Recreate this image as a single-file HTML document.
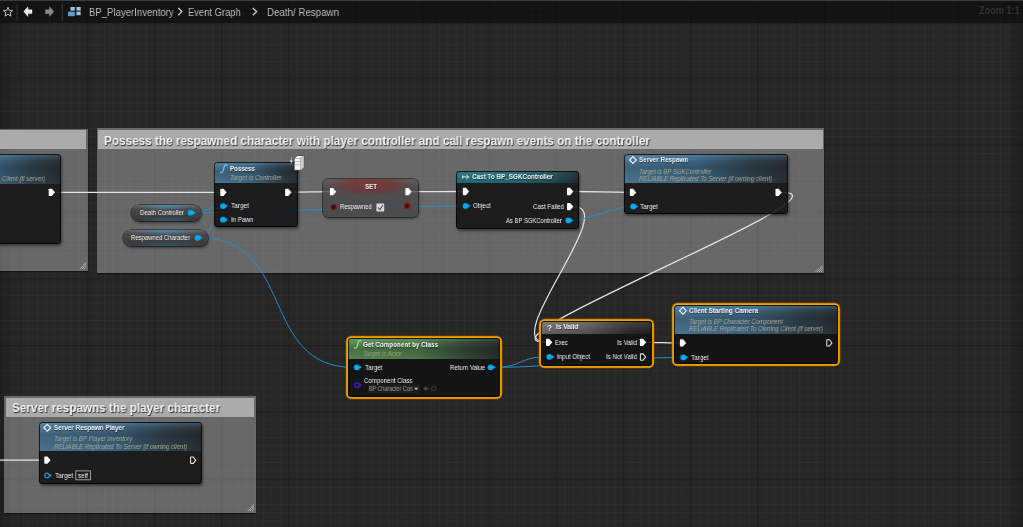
<!DOCTYPE html>
<html><head><meta charset="utf-8"><style>
*{margin:0;padding:0;box-sizing:border-box}
html,body{width:1023px;height:527px;overflow:hidden;background:#262626;font-family:"Liberation Sans",sans-serif}
.grid{position:absolute;left:0;top:0}
.vig{position:absolute;left:0;top:22px;width:1023px;height:505px;background:linear-gradient(90deg,rgba(0,0,0,0.22) 0,rgba(0,0,0,0) 16px,rgba(0,0,0,0) 1007px,rgba(0,0,0,0.25) 1023px)}
.layer{position:absolute;left:0;top:0;width:1023px;height:527px}
.topbar{position:absolute;left:0;top:0;width:1023px;height:22.5px;background:rgba(0,0,0,0.5);border-top:1px solid #3c3c3c}
.cmt{position:absolute;background:rgba(255,255,255,0.30);box-shadow:0 1px 1px rgba(0,0,0,0.45)}
.cmth{position:absolute;left:1.5px;right:1.5px;top:1.6px;height:19.1px;background:#ababab}
.grip{position:absolute;right:1.5px;bottom:1.5px;width:8px;height:8px;background:repeating-linear-gradient(45deg,rgba(255,255,255,0.28) 0 0.8px,rgba(255,255,255,0) 0.8px 1.6px),repeating-linear-gradient(135deg,rgba(255,255,255,0.28) 0 0.8px,rgba(255,255,255,0) 0.8px 1.6px);clip-path:polygon(100% 0,100% 100%,0 100%)}
.node{position:absolute;border-radius:3.5px;background:rgba(18,18,18,0.88);box-shadow:1px 2px 3px rgba(0,0,0,0.45);overflow:hidden}
.node::after{content:'';position:absolute;left:0;top:0;right:0;bottom:0;border-radius:3.5px;box-shadow:inset 0 0 0 0.9px rgba(0,0,0,0.8)}
.node.sel{box-shadow:0 0 0 1.8px #eea200,0 0 0 2.5px rgba(170,90,0,0.7),0 1px 3px rgba(0,0,0,0.5)}
.hdr{position:absolute;left:0;top:0;right:0}
.hb{background:linear-gradient(180deg,rgba(110,180,230,0.30) 0,rgba(110,180,230,0) 22%,rgba(0,0,0,0.16) 45%,rgba(0,0,0,0.02) 100%),linear-gradient(90deg,#4a7692 0,#3e6480 45%,#2f404b 78%,#2a2f33 100%)}
.ht{background:linear-gradient(180deg,rgba(255,255,255,0.06) 0,rgba(0,0,0,0.05) 100%),linear-gradient(90deg,#1f6f78 0,#1f6a73 50%,#1f4a52 80%,#1e2a2e 100%)}
.hg{background:linear-gradient(180deg,rgba(160,230,150,0.22) 0,rgba(160,230,150,0) 20%,rgba(0,0,0,0.2) 50%,rgba(0,0,0,0.05) 100%),linear-gradient(90deg,#5a8a56 0,#507c4c 45%,#34463a 80%,#2c302c 100%)}
.hgr{background:linear-gradient(180deg,rgba(255,255,255,0.12) 0,rgba(0,0,0,0.1) 100%),linear-gradient(90deg,#6a6a6a 0,#5a5a5a 40%,#2a2a2a 80%,#1f1f1f 100%)}
.setnode{position:absolute;border-radius:5px;background:linear-gradient(180deg,#5a5a5a 0,#484848 25%,#444 100%);box-shadow:0 0 0 0.8px rgba(0,0,0,0.8),1px 2px 3px rgba(0,0,0,0.5);overflow:hidden;opacity:0.78}
.setglow{position:absolute;left:6px;right:6px;top:0;height:16px;background:radial-gradient(ellipse 55% 75% at 50% 35%,rgba(150,30,30,0.8) 0,rgba(130,30,30,0.55) 50%,rgba(120,30,30,0) 100%)}
.var{position:absolute;border-radius:8px;background:radial-gradient(ellipse 45% 38% at 50% 0,rgba(70,165,230,0.6),rgba(70,165,230,0) 100%),radial-gradient(ellipse 45% 30% at 50% 100%,rgba(50,140,200,0.38),rgba(50,140,200,0) 100%),linear-gradient(180deg,#666 0,#4a4a4a 25%,#3e3e3e 70%,#383838 100%);box-shadow:0 0 0 0.6px rgba(0,0,0,0.8),1px 2px 3px rgba(0,0,0,0.45)}
.t{position:absolute;white-space:nowrap;transform-origin:0 50%;color:#f0f0f0;-webkit-font-smoothing:antialiased;will-change:transform}
.crumb{color:#bdbdbd}
.zoomt{color:#343434;font-weight:bold}
.ctitle{font-weight:bold;color:#f4f4f4;text-shadow:0.8px 1px 1px rgba(0,0,0,0.8)}
.ntitle{font-weight:bold;color:#f4f4f4;text-shadow:0.5px 0.6px 0.6px rgba(0,0,0,0.45)}
.sub{font-style:italic;color:#a8a890}
.subg{color:#98a474}
.pin{color:#f2f2f2}
.dd{color:#9a9a9a}
</style></head>
<body>
<svg class="grid" width="1023" height="527" viewBox="0 0 1023 527"><path d="M3.95 0V527M12.33 0V527M29.07 0V527M37.45 0V527M45.82 0V527M54.20 0V527M62.57 0V527M70.94 0V527M79.32 0V527M96.07 0V527M104.44 0V527M112.81 0V527M121.19 0V527M129.56 0V527M137.94 0V527M146.31 0V527M163.06 0V527M171.43 0V527M179.81 0V527M188.18 0V527M196.55 0V527M204.93 0V527M213.30 0V527M230.05 0V527M238.42 0V527M246.80 0V527M255.17 0V527M263.55 0V527M271.92 0V527M280.29 0V527M297.04 0V527M305.42 0V527M313.79 0V527M322.16 0V527M330.54 0V527M338.91 0V527M347.29 0V527M364.03 0V527M372.41 0V527M380.78 0V527M389.16 0V527M397.53 0V527M405.90 0V527M414.28 0V527M431.03 0V527M439.40 0V527M447.77 0V527M456.15 0V527M464.52 0V527M472.90 0V527M481.27 0V527M498.02 0V527M506.39 0V527M514.77 0V527M523.14 0V527M531.51 0V527M539.89 0V527M548.26 0V527M565.01 0V527M573.38 0V527M581.76 0V527M590.13 0V527M598.51 0V527M606.88 0V527M615.25 0V527M632.00 0V527M640.38 0V527M648.75 0V527M657.12 0V527M665.50 0V527M673.87 0V527M682.25 0V527M698.99 0V527M707.37 0V527M715.74 0V527M724.12 0V527M732.49 0V527M740.86 0V527M749.24 0V527M765.99 0V527M774.36 0V527M782.73 0V527M791.11 0V527M799.48 0V527M807.86 0V527M816.23 0V527M832.98 0V527M841.35 0V527M849.73 0V527M858.10 0V527M866.47 0V527M874.85 0V527M883.22 0V527M899.97 0V527M908.34 0V527M916.72 0V527M925.09 0V527M933.47 0V527M941.84 0V527M950.21 0V527M966.96 0V527M975.34 0V527M983.71 0V527M992.08 0V527M1000.46 0V527M1008.83 0V527M1017.21 0V527M0 3.00H1023M0 19.72H1023M0 28.07H1023M0 36.42H1023M0 44.78H1023M0 53.14H1023M0 61.49H1023M0 69.84H1023M0 86.56H1023M0 94.91H1023M0 103.27H1023M0 111.62H1023M0 119.98H1023M0 128.33H1023M0 136.69H1023M0 153.40H1023M0 161.75H1023M0 170.11H1023M0 178.46H1023M0 186.81H1023M0 195.17H1023M0 203.53H1023M0 220.24H1023M0 228.59H1023M0 236.94H1023M0 245.30H1023M0 253.66H1023M0 262.01H1023M0 270.37H1023M0 287.07H1023M0 295.43H1023M0 303.79H1023M0 312.14H1023M0 320.50H1023M0 328.85H1023M0 337.20H1023M0 353.92H1023M0 362.27H1023M0 370.62H1023M0 378.98H1023M0 387.33H1023M0 395.69H1023M0 404.05H1023M0 420.75H1023M0 429.11H1023M0 437.47H1023M0 445.82H1023M0 454.18H1023M0 462.53H1023M0 470.88H1023M0 487.60H1023M0 495.95H1023M0 504.31H1023M0 512.66H1023M0 521.01H1023" stroke="#2d2d2d" stroke-width="1" fill="none"/><path d="M20.70 0V527M87.69 0V527M154.68 0V527M221.68 0V527M288.67 0V527M355.66 0V527M422.65 0V527M489.64 0V527M556.64 0V527M623.63 0V527M690.62 0V527M757.61 0V527M824.60 0V527M891.60 0V527M958.59 0V527M0 11.36H1023M0 78.20H1023M0 145.04H1023M0 211.88H1023M0 278.72H1023M0 345.56H1023M0 412.40H1023M0 479.24H1023" stroke="#202020" stroke-width="1" fill="none"/></svg>
<div class="topbar"></div><div class="vig"></div>
<svg class="layer" width="1023" height="527" viewBox="0 0 1023 527">
<path d="M8 7.2L9.3 10.4L12.7 10.6L10.1 12.8L10.9 16.1L8 14.3L5.1 16.1L5.9 12.8L3.3 10.6L6.7 10.4Z" fill="none" stroke="#cfcfcf" stroke-width="0.9"/>
<rect x="16.6" y="3.5" width="0.9" height="17" fill="#3a3a3a"/>
<path d="M23.5 11.6L28.2 6.3V9.5H32.2V13.7H28.2V16.9Z" fill="#e8e8e8"/>
<path d="M54 11.6L49.3 6.3V9.5H45.3V13.7H49.3V16.9Z" fill="#8a8a8a"/>
<rect x="61.8" y="3.5" width="0.9" height="17" fill="#3a3a3a"/>
<rect x="70.5" y="7" width="4.3" height="3.6" fill="#9cc6e6"/><rect x="76.4" y="7" width="4.3" height="3.6" fill="#9cc6e6"/>
<rect x="68" y="11.6" width="6.8" height="4.6" fill="#5d9cd0"/><rect x="76.4" y="11.6" width="4.3" height="3.6" fill="#9cc6e6"/>
<path d="M178.3 8L181.8 11.6L178.3 15.2" fill="none" stroke="#cfcfcf" stroke-width="1.3"/>
<path d="M252.8 8L256.6 11.6L252.8 15.2" fill="none" stroke="#cfcfcf" stroke-width="1.3"/>
</svg>
<div class="cmt" style="left:-30px;top:128.5px;width:117.9px;height:142.10000000000002px"><div class="cmth"></div><div class="grip"></div></div>
<div class="cmt" style="left:96.5px;top:128.3px;width:727.6px;height:145.2px"><div class="cmth"></div><div class="grip"></div></div>
<div class="cmt" style="left:4.2px;top:396.3px;width:251.5px;height:116.30000000000001px"><div class="cmth"></div><div class="grip"></div></div>
<svg class="layer" width="1023" height="527" viewBox="0 0 1023 527"><path d="M55.00 192.30C65.00 192.30 210.00 192.30 220.00 192.30" stroke="#e6e6e6" stroke-width="1.3" fill="none" opacity="1.0"/><path d="M291.50 192.20C301.50 192.20 320.00 191.70 330.00 191.70" stroke="#e6e6e6" stroke-width="1.3" fill="none" opacity="1.0"/><path d="M411.50 191.70C421.50 191.70 452.60 191.50 462.60 191.50" stroke="#e6e6e6" stroke-width="1.3" fill="none" opacity="1.0"/><path d="M573.30 191.50C583.30 191.50 619.80 192.40 629.80 192.40" stroke="#e6e6e6" stroke-width="1.3" fill="none" opacity="1.0"/><path d="M646.40 342.30C656.40 342.30 669.80 342.90 679.80 342.90" stroke="#e6e6e6" stroke-width="1.3" fill="none" opacity="1.0"/><path d="M0.00 460.20C10.00 460.20 34.00 460.20 44.00 460.20" stroke="#e6e6e6" stroke-width="1.3" fill="none" opacity="1.0"/><path d="M573.30 206.60C621.30 206.60 497.80 342.30 545.80 342.30" stroke="#e6e6e6" stroke-width="1.2" fill="none" opacity="1.0"/><path d="M781.70 192.40C861.70 192.40 465.80 342.30 545.80 342.30" stroke="#e6e6e6" stroke-width="1.2" fill="none" opacity="1.0"/><path d="M194.00 212.70C204.00 212.70 210.00 206.10 220.00 206.10" stroke="#2290c8" stroke-width="1.0" fill="none" opacity="1.0"/><path d="M194.00 212.70C254.00 212.70 402.30 205.90 462.30 205.90" stroke="#2290c8" stroke-width="1.0" fill="none" opacity="1.0"/><path d="M201.00 237.80C211.00 237.80 210.00 219.70 220.00 219.70" stroke="#2290c8" stroke-width="1.0" fill="none" opacity="1.0"/><path d="M201.00 237.80C295.00 237.80 259.30 367.40 353.30 367.40" stroke="#2290c8" stroke-width="1.0" fill="none" opacity="1.0"/><path d="M572.90 220.40C584.90 220.40 617.80 206.50 629.80 206.50" stroke="#2290c8" stroke-width="1.0" fill="none" opacity="1.0"/><path d="M495.30 367.40C520.30 367.40 520.80 356.80 545.80 356.80" stroke="#2290c8" stroke-width="1.0" fill="none" opacity="1.0"/><path d="M495.30 367.40C555.30 367.40 619.80 357.40 679.80 357.40" stroke="#2290c8" stroke-width="1.0" fill="none" opacity="1.0"/></svg>
<div class="node" style="left:-60px;top:154px;width:120.5px;height:89.80000000000001px"><div class="hdr hb" style="height:30px"></div></div><div class="node" style="left:214.2px;top:162.1px;width:83.69999999999999px;height:65.0px"><div class="hdr hb" style="height:21.0px"></div></div><div class="setnode" style="left:322.8px;top:178.9px;width:95.4px;height:37.8px"><div class="setglow"></div></div><div class="node" style="left:456.4px;top:170.6px;width:122.30000000000007px;height:58.0px"><div class="hdr ht" style="height:12.099999999999994px"></div></div><div class="node" style="left:624px;top:153.7px;width:163.70000000000005px;height:60.60000000000002px"><div class="hdr hb" style="height:29.80000000000001px"></div></div><div class="node sel" style="left:348.40000000000003px;top:338.40000000000003px;width:151.99999999999994px;height:58.39999999999992px"><div class="hdr hg" style="height:20.599999999999966px"></div></div><div class="node sel" style="left:540.7px;top:321.3px;width:111.39999999999998px;height:44.39999999999998px"><div class="hdr hgr" style="height:12.399999999999977px"></div></div><div class="node sel" style="left:674.3000000000001px;top:304.70000000000005px;width:163.9999999999999px;height:59.59999999999991px"><div class="hdr hb" style="height:29.199999999999932px"></div></div><div class="node" style="left:38.5px;top:421.7px;width:163.7px;height:62.80000000000001px"><div class="hdr hb" style="height:29.400000000000034px"></div></div><div class="var" style="left:130.6px;top:204.8px;width:70.9px;height:16.0px"></div><div class="var" style="left:122.5px;top:230.0px;width:85.8px;height:16.0px"></div>
<svg class="layer" width="1023" height="527" viewBox="0 0 1023 527"><path d="M49.40 188.65H51.80L55.00 192.30L51.80 195.95H49.40Q48.70 195.95 48.70 195.25V189.35Q48.70 188.65 49.40 188.65Z" fill="#fff"/><path d="M221.00 188.65H223.40L226.60 192.30L223.40 195.95H221.00Q220.30 195.95 220.30 195.25V189.35Q220.30 188.65 221.00 188.65Z" fill="#fff"/><path d="M285.90 188.65H288.30L291.50 192.30L288.30 195.95H285.90Q285.20 195.95 285.20 195.25V189.35Q285.20 188.65 285.90 188.65Z" fill="#fff"/><circle cx="223.00" cy="206.10" r="2.9" fill="#00a8f2"/><path d="M225.50 204.40L228.20 206.10L225.50 207.80Z" fill="#00a8f2"/><circle cx="223.00" cy="219.70" r="2.9" fill="#00a8f2"/><path d="M225.50 218.00L228.20 219.70L225.50 221.40Z" fill="#00a8f2"/><path d="M330.60 188.05H333.00L336.20 191.70L333.00 195.35H330.60Q329.90 195.35 329.90 194.65V188.75Q329.90 188.05 330.60 188.05Z" fill="#fff"/><path d="M406.10 188.05H408.50L411.70 191.70L408.50 195.35H406.10Q405.40 195.35 405.40 194.65V188.75Q405.40 188.05 406.10 188.05Z" fill="#fff"/><path d="M463.50 187.85H465.90L469.10 191.50L465.90 195.15H463.50Q462.80 195.15 462.80 194.45V188.55Q462.80 187.85 463.50 187.85Z" fill="#fff"/><path d="M567.70 187.85H570.10L573.30 191.50L570.10 195.15H567.70Q567.00 195.15 567.00 194.45V188.55Q567.00 187.85 567.70 187.85Z" fill="#fff"/><circle cx="465.60" cy="205.90" r="2.9" fill="#00a8f2"/><path d="M468.10 204.20L470.80 205.90L468.10 207.60Z" fill="#00a8f2"/><path d="M567.70 202.95H570.10L573.30 206.60L570.10 210.25H567.70Q567.00 210.25 567.00 209.55V203.65Q567.00 202.95 567.70 202.95Z" fill="#fff"/><circle cx="568.40" cy="220.40" r="2.9" fill="#00a8f2"/><path d="M570.90 218.70L573.60 220.40L570.90 222.10Z" fill="#00a8f2"/><path d="M630.60 188.75H633.00L636.20 192.40L633.00 196.05H630.60Q629.90 196.05 629.90 195.35V189.45Q629.90 188.75 630.60 188.75Z" fill="#fff"/><path d="M776.20 188.75H778.60L781.80 192.40L778.60 196.05H776.20Q775.50 196.05 775.50 195.35V189.45Q775.50 188.75 776.20 188.75Z" fill="#fff"/><circle cx="633.20" cy="206.50" r="2.9" fill="#00a8f2"/><path d="M635.70 204.80L638.40 206.50L635.70 208.20Z" fill="#00a8f2"/><circle cx="356.70" cy="367.30" r="2.9" fill="#00a8f2"/><path d="M359.20 365.60L361.90 367.30L359.20 369.00Z" fill="#00a8f2"/><circle cx="490.60" cy="367.30" r="2.9" fill="#00a8f2"/><path d="M493.10 365.60L495.80 367.30L493.10 369.00Z" fill="#00a8f2"/><circle cx="356.90" cy="385.20" r="2.3" fill="none" stroke="#5018c8" stroke-width="1.3"/><path d="M359.40 383.50L362.10 385.20L359.40 386.90Z" fill="#5018c8"/><path d="M546.70 338.65H549.10L552.30 342.30L549.10 345.95H546.70Q546.00 345.95 546.00 345.25V339.35Q546.00 338.65 546.70 338.65Z" fill="#fff"/><path d="M640.60 338.65H643.00L646.20 342.30L643.00 345.95H640.60Q639.90 345.95 639.90 345.25V339.35Q639.90 338.65 640.60 338.65Z" fill="#fff"/><circle cx="549.30" cy="356.80" r="2.9" fill="#00a8f2"/><path d="M551.80 355.10L554.50 356.80L551.80 358.50Z" fill="#00a8f2"/><path d="M640.80 353.85H643.10L645.60 357.00L643.10 360.15H640.80Q640.40 360.15 640.40 359.75V354.25Q640.40 353.85 640.80 353.85Z" fill="none" stroke="#e4e4e4" stroke-width="1.05"/><path d="M680.60 339.25H683.00L686.20 342.90L683.00 346.55H680.60Q679.90 346.55 679.90 345.85V339.95Q679.90 339.25 680.60 339.25Z" fill="#fff"/><path d="M827.20 339.75H829.50L832.00 342.90L829.50 346.05H827.20Q826.80 346.05 826.80 345.65V340.15Q826.80 339.75 827.20 339.75Z" fill="none" stroke="#e4e4e4" stroke-width="1.05"/><circle cx="683.30" cy="357.40" r="2.9" fill="#00a8f2"/><path d="M685.80 355.70L688.50 357.40L685.80 359.10Z" fill="#00a8f2"/><path d="M45.00 456.55H47.40L50.60 460.20L47.40 463.85H45.00Q44.30 463.85 44.30 463.15V457.25Q44.30 456.55 45.00 456.55Z" fill="#fff"/><path d="M191.00 457.05H193.30L195.80 460.20L193.30 463.35H191.00Q190.60 463.35 190.60 462.95V457.45Q190.60 457.05 191.00 457.05Z" fill="none" stroke="#e4e4e4" stroke-width="1.05"/><circle cx="47.10" cy="475.40" r="2.3" fill="none" stroke="#1d8fc8" stroke-width="1.3"/><path d="M49.60 473.70L52.30 475.40L49.60 477.10Z" fill="#1d8fc8"/><circle cx="190.60" cy="212.70" r="2.9" fill="#00a8f2"/><path d="M193.10 211.00L195.80 212.70L193.10 214.40Z" fill="#00a8f2"/><circle cx="197.50" cy="237.80" r="2.9" fill="#00a8f2"/><path d="M200.00 236.10L202.70 237.80L200.00 239.50Z" fill="#00a8f2"/></svg>
<svg class="layer" width="1023" height="527" viewBox="0 0 1023 527"><path d="M220.30 172.10C221.20 173.00 222.50 172.70 223.10 170.90L224.20 166.70C224.70 164.90 225.90 164.40 226.90 165.20" fill="none" stroke="#7cbce8" stroke-width="1.3" stroke-linecap="round"/><path d="M354.30 347.60C355.20 348.50 356.50 348.20 357.10 346.40L358.20 342.20C358.70 340.40 359.90 339.90 360.90 340.70" fill="none" stroke="#9ee08e" stroke-width="1.3" stroke-linecap="round"/><path d="M629.5 160.0L632.9 156.6L636.3 160.0L632.9 163.4Z" fill="none" stroke="#f0f0f0" stroke-width="1.2"/><path d="M679.5 310.7L682.9 307.3L686.3 310.7L682.9 314.09999999999997Z" fill="none" stroke="#f0f0f0" stroke-width="1.2"/><path d="M43.9 427.7L47.3 424.3L50.699999999999996 427.7L47.3 431.09999999999997Z" fill="none" stroke="#f0f0f0" stroke-width="1.2"/><path d="M462.5 176.9H468.6M466.3 174.8L468.8 176.9L466.3 179" fill="none" stroke="#e8e8e8" stroke-width="1"/><rect x="462.2" y="175.3" width="1" height="3.2" fill="#e8e8e8"/><path d="M294.2 158.4L297.3 155.5H303.7V167.4L300.7 170.3H294.2Z" fill="#f6f6f6" stroke="#2a2a2a" stroke-width="0.7"/><path d="M300.7 158.4L303.7 155.5V167.4L300.7 170.3Z" fill="#d2d2d2"/><path d="M294.2 158.4H300.7L303.7 155.5M300.7 158.4V170.3" fill="none" stroke="#777" stroke-width="0.5"/><path d="M294.7 161.6H300.4M294.7 164.9H300.4" stroke="#999" stroke-width="0.6"/><path d="M291.9 156.2L289.5 161.9H291.2L290.1 166.4L293.1 160.2H291.5L292.7 156.2Z" fill="#f0f0f0" stroke="#333" stroke-width="0.4"/><rect x="376.4" y="203.6" width="7.8" height="7.8" rx="1" fill="#d8d8d8"/><path d="M377.8 207.3L379.9 209.6L383 205" fill="none" stroke="#555" stroke-width="1.1"/><circle cx="333.6" cy="207.2" r="2.7" fill="#1a1a1a" stroke="#a01010" stroke-width="1.2"/><path d="M336.6 205.79999999999998L338.20000000000005 207.2L336.6 208.6Z" fill="#a01010"/><circle cx="407.2" cy="205.8" r="2.7" fill="#1a1a1a" stroke="#a01010" stroke-width="1.2"/><path d="M410.2 204.4L411.8 205.8L410.2 207.20000000000002Z" fill="#a01010"/><rect x="368.2" y="384.6" width="51.5" height="8.6" rx="1" fill="#1e1e1e"/><path d="M414 387.8H418.3L416.15 390.2Z" fill="#bbb"/><path d="M423.2 388.7L426.2 386V387.7H428.4V389.7H426.2V391.4Z" fill="#444"/><circle cx="433.8" cy="388.2" r="2.2" fill="none" stroke="#444" stroke-width="0.9"/><path d="M432.2 389.9L430.6 391.6" stroke="#444" stroke-width="0.9"/><rect x="75.8" y="470.9" width="14.6" height="8.9" fill="none" stroke="#bdbdbd" stroke-width="0.8"/></svg>
<span class="t crumb" id="bc1" style="left:88.60px;top:6.90px;font-size:11px;line-height:11px;transform:scaleX(0.8699);">BP_PlayerInventory</span>
<span class="t crumb" id="bc2" style="left:187.50px;top:6.90px;font-size:11px;line-height:11px;transform:scaleX(0.8534);">Event Graph</span>
<span class="t crumb" id="bc3" style="left:267.20px;top:6.90px;font-size:11px;line-height:11px;transform:scaleX(0.8854);">Death/ Respawn</span>
<span class="t zoomt" id="zoom" style="left:978.60px;top:5.10px;font-size:11px;line-height:11px;transform:scaleX(0.8324);">Zoom 1:1</span>
<span class="t ctitle" id="c1" style="left:104.40px;top:134.55px;font-size:12.3px;line-height:12.3px;transform:scaleX(0.9555);">Possess the respawned character with player controller and call respawn events on the controller</span>
<span class="t ctitle" id="c2" style="left:12.10px;top:402.05px;font-size:12.3px;line-height:12.3px;transform:scaleX(0.9514);">Server respawns the player character</span>
<span class="t ntitle" id="n_pos" style="left:229.50px;top:165.00px;font-size:8px;line-height:8px;transform:scaleX(0.7662);">Possess</span>
<span class="t ntitle" id="n_set" style="left:364.90px;top:182.80px;font-size:8px;line-height:8px;transform:scaleX(0.7657);">SET</span>
<span class="t ntitle" id="n_cast" style="left:472.10px;top:172.90px;font-size:8px;line-height:8px;transform:scaleX(0.7914);">Cast To BP_SGKController</span>
<span class="t ntitle" id="n_sr" style="left:639.40px;top:156.00px;font-size:8px;line-height:8px;transform:scaleX(0.7921);">Server Respawn</span>
<span class="t ntitle" id="n_gc" style="left:363.30px;top:340.60px;font-size:8px;line-height:8px;transform:scaleX(0.7891);">Get Component by Class</span>
<span class="t ntitle" id="q_iv" style="left:546.80px;top:322.65px;font-size:9.5px;line-height:9.5px;transform:scaleX(0.8667);">?</span>
<span class="t ntitle" id="n_iv" style="left:555.70px;top:323.20px;font-size:8px;line-height:8px;transform:scaleX(0.8128);">Is Valid</span>
<span class="t ntitle" id="n_cam" style="left:689.40px;top:306.70px;font-size:8px;line-height:8px;transform:scaleX(0.8019);">Client Starting Camera</span>
<span class="t ntitle" id="n_srp" style="left:53.80px;top:423.70px;font-size:8px;line-height:8px;transform:scaleX(0.7965);">Server Respawn Player</span>
<span class="t sub" id="s_pos" style="left:229.70px;top:175.30px;font-size:6.8px;line-height:6.8px;transform:scaleX(0.9032);">Target is Controller</span>
<span class="t sub" id="s_sr1" style="left:639.40px;top:168.50px;font-size:6.8px;line-height:6.8px;transform:scaleX(0.8796);">Target is BP SGKController</span>
<span class="t sub" id="s_sr2" style="left:639.40px;top:176.10px;font-size:6.8px;line-height:6.8px;transform:scaleX(0.8960);">RELIABLE Replicated To Server (if owning client)</span>
<span class="t sub subg" id="s_gc" style="left:363.30px;top:351.20px;font-size:6.8px;line-height:6.8px;transform:scaleX(0.8961);">Target is Actor</span>
<span class="t sub" id="s_cam1" style="left:689.40px;top:319.20px;font-size:6.8px;line-height:6.8px;transform:scaleX(0.8899);">Target is BP Character Component</span>
<span class="t sub" id="s_cam2" style="left:689.40px;top:326.40px;font-size:6.8px;line-height:6.8px;transform:scaleX(0.8907);">RELIABLE Replicated To Owning Client (if server)</span>
<span class="t sub" id="s_srp1" style="left:53.80px;top:436.00px;font-size:6.8px;line-height:6.8px;transform:scaleX(0.8962);">Target is BP Player Inventory</span>
<span class="t sub" id="s_srp2" style="left:53.80px;top:443.80px;font-size:6.8px;line-height:6.8px;transform:scaleX(0.8960);">RELIABLE Replicated To Server (if owning client)</span>
<span class="t sub" id="s_left" style="left:2.00px;top:175.60px;font-size:6.8px;line-height:6.8px;transform:scaleX(0.9015);">Client (if server)</span>
<span class="t pin" id="p1" style="left:230.60px;top:202.45px;font-size:7.3px;line-height:7.3px;transform:scaleX(0.8789);">Target</span>
<span class="t pin" id="p2" style="left:230.60px;top:216.05px;font-size:7.3px;line-height:7.3px;transform:scaleX(0.8477);">In Pawn</span>
<span class="t pin" id="p3" style="left:340.30px;top:203.35px;font-size:7.3px;line-height:7.3px;transform:scaleX(0.8238);">Respawned</span>
<span class="t pin" id="p4" style="left:472.90px;top:202.25px;font-size:7.3px;line-height:7.3px;transform:scaleX(0.8356);">Object</span>
<span class="t pin" id="p5" style="left:532.70px;top:202.95px;font-size:7.3px;line-height:7.3px;transform:scaleX(0.8440);">Cast Failed</span>
<span class="t pin" id="p6" style="left:505.90px;top:216.75px;font-size:7.3px;line-height:7.3px;transform:scaleX(0.8067);">As BP SGKController</span>
<span class="t pin" id="p7" style="left:640.30px;top:202.85px;font-size:7.3px;line-height:7.3px;transform:scaleX(0.8740);">Target</span>
<span class="t pin" id="p8" style="left:364.60px;top:363.75px;font-size:7.3px;line-height:7.3px;transform:scaleX(0.8542);">Target</span>
<span class="t pin" id="p9" style="left:449.60px;top:363.75px;font-size:7.3px;line-height:7.3px;transform:scaleX(0.8311);">Return Value</span>
<span class="t pin" id="p10" style="left:364.30px;top:376.65px;font-size:7.3px;line-height:7.3px;transform:scaleX(0.8346);">Component Class</span>
<span class="t dd" id="p11" style="left:369.10px;top:385.55px;font-size:6.5px;line-height:6.5px;transform:scaleX(0.8281);">BP Character Con</span>
<span class="t pin" id="p12" style="left:555.30px;top:338.65px;font-size:7.3px;line-height:7.3px;transform:scaleX(0.7844);">Exec</span>
<span class="t pin" id="p13" style="left:616.80px;top:338.65px;font-size:7.3px;line-height:7.3px;transform:scaleX(0.8616);">Is Valid</span>
<span class="t pin" id="p14" style="left:557.00px;top:353.15px;font-size:7.3px;line-height:7.3px;transform:scaleX(0.8393);">Input Object</span>
<span class="t pin" id="p15" style="left:605.90px;top:353.35px;font-size:7.3px;line-height:7.3px;transform:scaleX(0.8444);">Is Not Valid</span>
<span class="t pin" id="p16" style="left:690.90px;top:353.75px;font-size:7.3px;line-height:7.3px;transform:scaleX(0.8641);">Target</span>
<span class="t pin" id="p17" style="left:54.60px;top:471.75px;font-size:7.3px;line-height:7.3px;transform:scaleX(0.8888);">Target</span>
<span class="t pin" id="p18" style="left:78.20px;top:472.10px;font-size:7.0px;line-height:7.0px;transform:scaleX(0.8951);">self</span>
<span class="t pin" id="v1" style="left:139.80px;top:209.05px;font-size:7.3px;line-height:7.3px;transform:scaleX(0.8249);">Death Controller</span>
<span class="t pin" id="v2" style="left:131.20px;top:234.15px;font-size:7.3px;line-height:7.3px;transform:scaleX(0.8132);">Respawned Character</span>
</body></html>
